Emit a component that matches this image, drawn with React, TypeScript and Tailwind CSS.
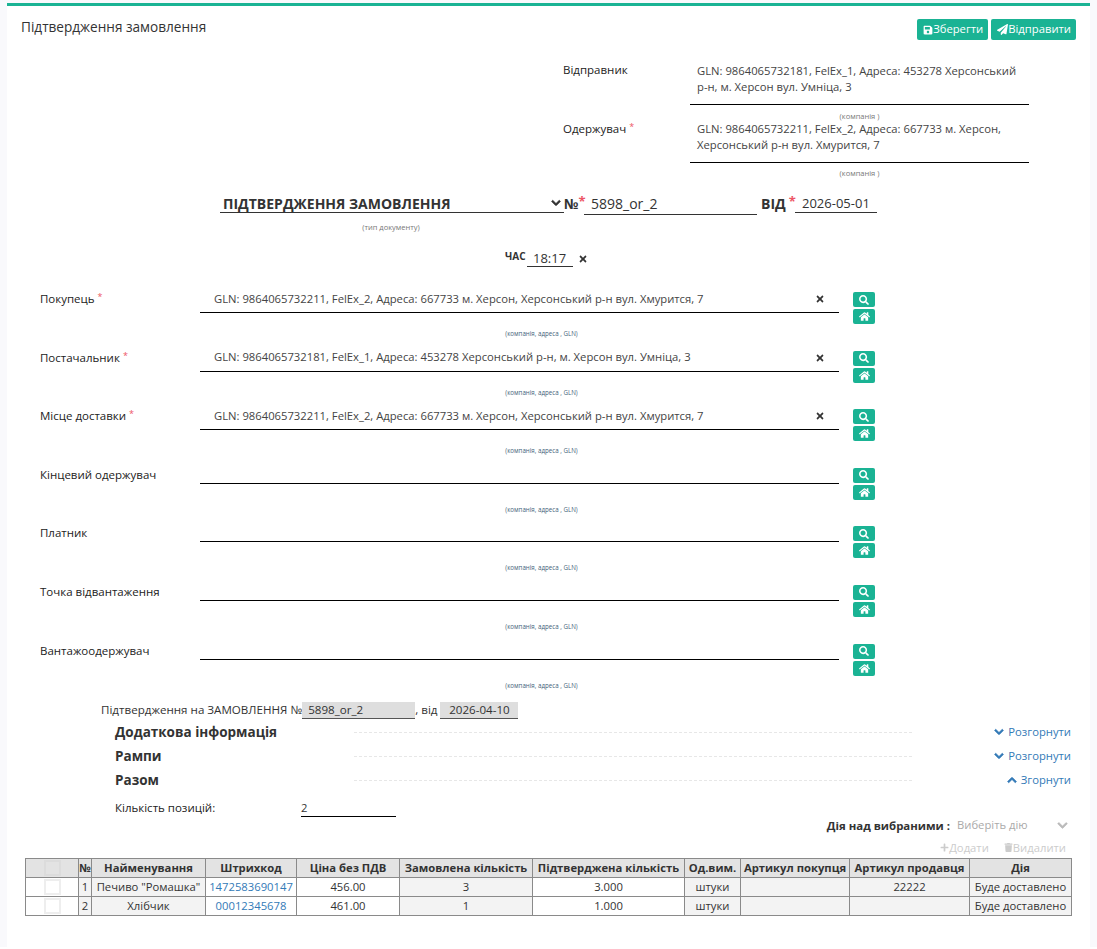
import { FaSave, FaPaperPlane, FaSearch, FaHome, FaTimes, FaChevronDown, FaChevronUp, FaPlus, FaTrash } from 'react-icons/fa';

const PARTIES = [
  { label: 'Покупець', req: true, value: 'GLN: 9864065732211, FelEx_2, Адреса: 667733 м. Херсон, Херсонський р-н вул. Хмурится, 7' },
  { label: 'Постачальник', req: true, value: 'GLN: 9864065732181, FelEx_1, Адреса: 453278 Херсонський р-н, м. Херсон вул. Умніца, 3' },
  { label: 'Місце доставки', req: true, value: 'GLN: 9864065732211, FelEx_2, Адреса: 667733 м. Херсон, Херсонський р-н вул. Хмурится, 7' },
  { label: 'Кінцевий одержувач' },
  { label: 'Платник' },
  { label: 'Точка відвантаження' },
  { label: 'Вантажоодержувач' },
];

const HEAD = [
  ['', 'w-[53px]'],
  ['№', 'w-[13px]'],
  ['Найменування', 'w-[114px]'],
  ['Штрихкод', 'w-[91px]'],
  ['Ціна без ПДВ', 'w-[103px]'],
  ['Замовлена кількість', 'w-[133px]'],
  ['Підтверджена кількість', 'w-[152px]'],
  ['Од.вим.', 'w-[56px]'],
  ['Артикул покупця', 'w-[109px]'],
  ['Артикул продавця', 'w-[120px]'],
  ['Дія', 'w-[102px]'],
];

const ROWS = [
  ['1', 'Печиво "Ромашка"', '1472583690147', '456.00', '3', '3.000', 'штуки', '', '22222', 'Буде доставлено'],
  ['2', 'Хлібчик', '00012345678', '461.00', '1', '1.000', 'штуки', '', '', 'Буде доставлено'],
];

// columns of a row that sit on the grey background
const GREY_CELLS = [0, 1, 4, 6, 7, 8, 9];

const Star = () => <span className="text-[#ed5565] text-[9px] leading-none align-[3px] ml-[3px]">*</span>;

const Section = ({ title, open }: { title: string; open?: boolean }) => (
  <div className="h-[24px] flex items-center">
    <div className="w-[239px] text-[13.5px] font-bold text-[#333]">{title}</div>
    <div className="w-[558px] border-t border-dashed border-[#e7e7e7]" />
    <a className="flex-1 flex items-center justify-end gap-[4px] text-[11.25px] text-[#337ab7]">
      {open ? <FaChevronUp size={10} stroke="currentColor" strokeWidth={40} /> : <FaChevronDown size={10} stroke="currentColor" strokeWidth={40} />}
      {open ? 'Згорнути' : 'Розгорнути'}
    </a>
  </div>
);

const App = () => {
  return (
    <div className="h-[947px] bg-[#f9f9fc] pl-[7px] pr-[7px] pt-[3px] text-[#333] text-[11.25px] [font-family:'Open_Sans',sans-serif]">
      <div className="bg-white border-t-[3px] border-[#1ab394] h-[944px]">
        {/* Header */}
        <div className="flex justify-between pl-[14px] pr-[14px] pt-[10px]">
          <h5 className="text-[13.6px] font-medium leading-[17px] mt-[2px]">Підтвердження замовлення</h5>
          <div className="flex gap-[3px] pt-[3px]">
            <button className="h-[21px] pl-[6px] pr-[5px] bg-[#1ab394] rounded-[2px] text-white text-[11.25px] flex items-center">
              <FaSave size={10} />Зберегти
            </button>
            <button className="h-[21px] pl-[6px] pr-[5px] bg-[#1ab394] rounded-[2px] text-white text-[11.25px] flex items-center">
              <FaPaperPlane size={11} />Відправити
            </button>
          </div>
        </div>

        {/* Sender / receiver */}
        <div className="pl-[556px] mt-[20px]">
          <div className="flex">
            <div className="w-[127px] font-medium text-[11.5px] text-[#222] pt-[2px] leading-[16px]">Відправник</div>
            <div className="w-[339px] h-[45px] border-b border-black px-[7px] pt-[3px] leading-[16px] text-[#444]">
              GLN: 9864065732181, FelEx_1, Адреса: 453278 Херсонський р-н, м. Херсон вул. Умніца, 3
            </div>
          </div>
          <div className="pl-[127px] w-[466px] text-center text-[7.5px] leading-[10px] mt-[6px] text-[#777]">(компанія )</div>
          <div className="flex">
            <div className="w-[127px] font-medium text-[11.5px] text-[#222] leading-[16px]">Одержувач<Star /></div>
            <div className="w-[339px] h-[42px] border-b border-black px-[7px] leading-[16px] text-[#444]">
              GLN: 9864065732211, FelEx_2, Адреса: 667733 м. Херсон, Херсонський р-н вул. Хмурится, 7
            </div>
          </div>
          <div className="pl-[127px] w-[466px] text-center text-[7.5px] leading-[10px] mt-[5px] text-[#777]">(компанія )</div>
        </div>

        {/* Document type */}
        <div className="flex pl-[213px] mt-[16px] items-start">
          <div className="w-[344px] h-[19px] border-b border-[#333] flex items-center justify-between pl-[3px] pr-[3px]">
            <span className="text-[14px] font-bold">ПІДТВЕРДЖЕННЯ ЗАМОВЛЕННЯ</span>
            <FaChevronDown size={10} stroke="currentColor" strokeWidth={40} />
          </div>
          <span className="w-[20px] text-[14px] font-bold leading-[20px] whitespace-nowrap">№<span className="text-[#ed5565] text-[13px] align-top leading-[14px]">*</span></span>
          <div className="w-[173px] h-[21px] border-b border-[#333] pl-[7px] text-[14px] leading-[20px]">5898_or_2</div>
          <span className="w-[34px] ml-[4px] text-[14px] font-bold leading-[20px] whitespace-nowrap">ВІД<span className="text-[#ed5565] text-[13px] align-top leading-[14px] ml-[3px]">*</span></span>
          <div className="w-[82px] h-[19px] border-b border-[#333] pl-[7px] text-[13px] leading-[18px]">2026-05-01</div>
        </div>
        <div className="w-[344px] ml-[213px] text-center text-[7.5px] leading-[10px] mt-[7px] text-[#777] pr-[2px]">(тип документу)</div>
        <div className="flex items-start pl-[498px] mt-[17px]">
          <span className="text-[10px] font-bold leading-[14px] mr-[1px]">ЧАС</span>
          <div className="w-[46px] h-[18px] border-b border-[#333] text-center text-[13px] leading-[18px]">18:17</div>
          <FaTimes size={10} className="ml-[5px] mt-[5px]" />
        </div>

        {/* Parties */}
        <div className="mt-[24px] pl-[33px]">
          {PARTIES.map((p) => (
            <div key={p.label} className="flex h-[58.6px]">
              <div className="w-[160px] font-medium text-[11.5px] text-[#222] leading-[16px]">
                {p.label}
                {p.req && <Star />}
              </div>
              <div className="w-[639px]">
                {p.value ? (
                  <div className="h-[22px] border-b border-black flex items-center justify-between pl-[14px] pr-[14px]">
                    <span className="-mt-[5px] text-[#444]">{p.value}</span>
                    <FaTimes size={10} className="-mt-[5px]" />
                  </div>
                ) : (
                  <div className="h-[17px] border-b border-black" />
                )}
                <div className={`text-center text-[6.2px] leading-[10px] pl-[44px] text-[#3f5f7a] ${p.value ? 'mt-[16px]' : 'mt-[21px]'}`}>
                  (компанія, адреса , GLN)
                </div>
              </div>
              <div className="ml-[14px] pt-[1px] flex flex-col gap-[2px]">
                <button className="w-[22px] h-[15px] bg-[#1ab394] rounded-[2px] text-white flex items-center justify-center"><FaSearch size={10} /></button>
                <button className="w-[22px] h-[15px] bg-[#1ab394] rounded-[2px] text-white flex items-center justify-center"><FaHome size={11} /></button>
              </div>
            </div>
          ))}
        </div>

        {/* Order reference */}
        <div className="flex pl-[94px] mt-[1px] leading-[15px] h-[17px] text-[11.6px] whitespace-nowrap">
          Підтвердження на ЗАМОВЛЕННЯ №
          <span className="w-[113px] bg-[#dedede] border-b border-[#555] pl-[6px]">5898_or_2</span>
          <span>, від</span>
          <span className="w-[78px] bg-[#dedede] border-b border-[#555] text-center ml-[3px]">2026-04-10</span>
        </div>

        {/* Sections */}
        <div className="pl-[108px] pr-[19px] mt-[1px]">
          <Section title="Додаткова інформація" />
          <Section title="Рампи" />
          <Section title="Разом" open />
        </div>
        <div className="flex pl-[108px] mt-[8px]">
          <div className="w-[186px] font-medium text-[11.5px] text-[#222] leading-[16px]">Кількість позицій:</div>
          <div className="w-[95px] h-[17px] border-b border-black leading-[16px]">2</div>
        </div>

        {/* Table actions */}
        <div className="flex justify-end items-center pr-[18px] h-[16px]">
          <span className="font-bold mr-[7px] text-[11.4px]">Дія над вибраними :</span>
          <span className="w-[115px] text-[#aaa] flex justify-between items-center pr-[4px]">
            Виберіть дію <FaChevronDown size={11} stroke="currentColor" strokeWidth={30} className="text-[#bbb]" />
          </span>
        </div>
        <div className="flex justify-end gap-[15px] pr-[24px] mt-[7px] text-[#ccc] leading-[15px]">
          <span className="flex items-center"><FaPlus size={9} />Додати</span>
          <span className="flex items-center"><FaTrash size={9} />Видалити</span>
        </div>

        {/* Goods table */}
        <div className="pl-[18px] mt-[3px]">
          <table className="w-[1046px] table-fixed border-collapse">
            <thead>
              <tr className="h-[19px] bg-[#e3e3e3]">
                {HEAD.map(([h, w], i) => (
                  <th key={i} className={`${w} border border-[#8a8a8a] p-0 font-bold whitespace-nowrap leading-[14px]`}>
                    {i === 0 ? <div className="w-[17px] h-[16px] mx-auto border-2 border-[#dcdcdc] bg-[#e3e3e3]" /> : h}
                  </th>
                ))}
              </tr>
            </thead>
            <tbody>
              {ROWS.map((r) => (
                <tr key={r[0]} className="h-[19px]">
                  <td className="border border-[#8a8a8a] p-0">
                    <div className="w-[17px] h-[16px] mx-auto border-2 border-[#eeeeee] bg-white" />
                  </td>
                  {r.map((c, i) => (
                    <td
                      key={i}
                      className={`border border-[#8a8a8a] p-0 text-center whitespace-nowrap leading-[14px] ${GREY_CELLS.includes(i) ? 'bg-[#f3f3f3]' : 'bg-white'} ${i === 2 ? 'text-[#337ab7]' : ''}`}
                    >
                      {c}
                    </td>
                  ))}
                </tr>
              ))}
            </tbody>
          </table>
        </div>
      </div>
    </div>
  );
};

export default App;
